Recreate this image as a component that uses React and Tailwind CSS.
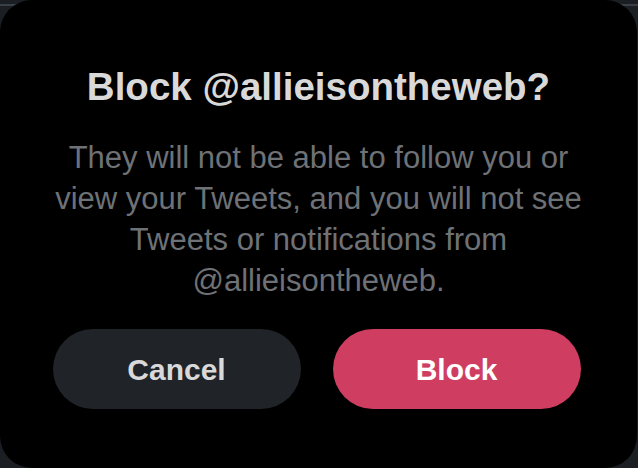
export default function App() {
  return (
    <div className="relative w-[638px] h-[468px] bg-[#1b1f24] overflow-hidden" style={{ fontFamily: '"Liberation Sans", Arial, sans-serif' }}>
      <div className="absolute left-0 right-0 top-[4px] h-[2px] bg-[#3a4048]" />
      <div className="absolute inset-0 right-[1px] rounded-[32px] bg-black flex flex-col items-center pt-[65px]">
        <h1 className="text-[38.5px] font-bold text-[#d9d9d9] leading-[44px] text-center whitespace-nowrap">Block @allieisontheweb?</h1>
        <p className="mt-[28px] text-[31px] leading-[41px] text-[#6e7276] text-center whitespace-nowrap">
          They will not be able to follow you or<br />
          view your Tweets, and you will not see<br />
          Tweets or notifications from<br />
          @allieisontheweb.
        </p>
        <div className="mt-[28px] flex gap-[32px] w-[528px] -translate-x-[2px]">
          <button className="flex-1 h-[80px] rounded-full bg-[#202327] text-[#d9d9d9] text-[30px] font-bold">Cancel</button>
          <button className="flex-1 h-[80px] rounded-full bg-[#cf3d61] text-white text-[30px] font-bold">Block</button>
        </div>
      </div>
    </div>
  );
}
